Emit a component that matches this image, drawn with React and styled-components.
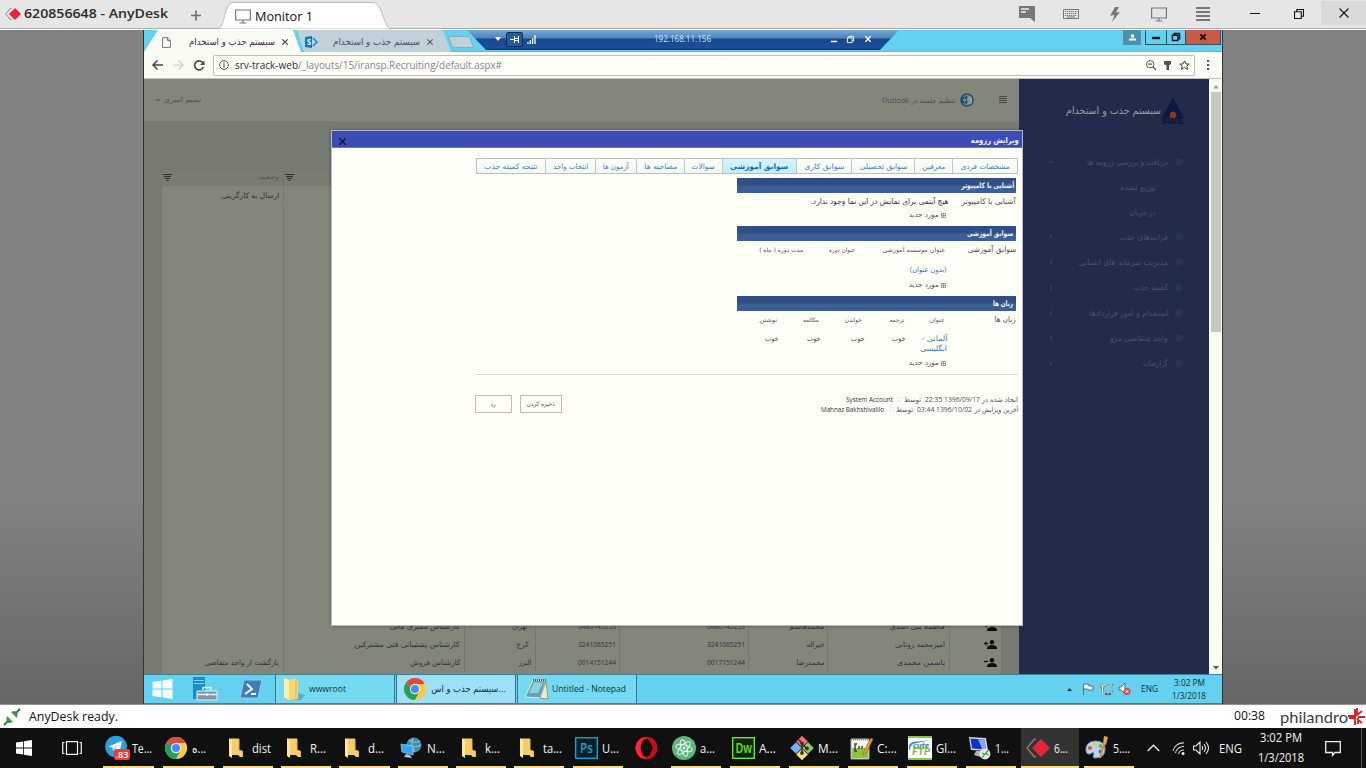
import React, { useLayoutEffect, useRef } from "react";
import styled, { createGlobalStyle, css } from "styled-components";

const Global = createGlobalStyle`
  * { box-sizing: border-box; }
  html, body { margin: 0; padding: 0; overflow: hidden; }
  body { width: 1366px; height: 768px; font-family: "Open Sans", "DejaVu Sans", sans-serif; background: #808080; }
`;

/* ---------- primitives ---------- */

const FitBox = styled.span`
  display: block;
  flex: none;
  width: ${(p) => p.$w}px;
  margin-inline-start: ${(p) => p.$gap || 0}px;
  font-family: ${(p) => (p.$rtl ? '"DejaVu Sans", sans-serif' : "inherit")};
  font-size: ${(p) => (p.$size ? `${p.$size}px` : "inherit")};
  font-weight: ${(p) => p.$weight || "inherit"};
  color: ${(p) => p.$color || "inherit"};
  line-height: 1.2;
`;
const FitLine = styled.span`
  display: flex;
  width: 100%;
  direction: ${(p) => (p.$rtl ? "rtl" : "ltr")};
`;
const FitInner = styled.span`
  flex: none;
  white-space: pre;
  transform-origin: ${(p) => (p.$rtl ? "right" : "left")} center;
`;

/* A single line of text condensed or widened to a given width. */
function Fit({ w, rtl, gap, size, weight, color, children }) {
  const ref = useRef(null);
  useLayoutEffect(() => {
    const el = ref.current;
    el.style.transform = "none";
    const natural = el.getBoundingClientRect().width;
    if (natural) el.style.transform = `scaleX(${w / natural})`;
  }, [w, children]);
  return (
    <FitBox $w={w} $rtl={rtl} $gap={gap} $size={size} $weight={weight} $color={color}>
      <FitLine $rtl={rtl}><FitInner ref={ref} $rtl={rtl}>{children}</FitInner></FitLine>
    </FitBox>
  );
}

const Svg = styled.svg`
  display: block;
  flex: none;
  margin-inline-start: ${(p) => p.$gap || 0}px;
  overflow: visible;
`;
function Icon({ w, h, gap, vb, children, ...rest }) {
  return (
    <Svg width={w} height={h} viewBox={vb || `0 0 ${w} ${h}`} fill="none" $gap={gap} {...rest}>
      {children}
    </Svg>
  );
}
const Spring = styled.div`flex: 1;`;

/* ---------- frame ---------- */

const Screen = styled.div`
  width: 1366px;
  height: 768px;
  display: flex;
  flex-direction: column;
  overflow: hidden;
`;
const TitleBar = styled.header`
  height: 30px;
  flex: none;
  display: flex;
  align-items: center;
  padding: 0 0 2px 5px;
  background: #e6e6e6;
  box-shadow: inset 0 -1px #fff, inset 0 -2px #aaa;
  color: #2b2b2b;
`;
const MonitorTab = styled.div`
  width: 171px;
  height: 28px;
  margin: 1px 0 0 18px;
  position: relative;
  flex: none;
  display: flex;
  align-items: center;
  padding: 3px 0 0 16px;
  color: #111;
`;
const TabShape = styled.svg`
  position: absolute;
  inset: 0;
  z-index: 0;
`;
const Over = styled.div`
  position: relative;
  display: flex;
  align-items: center;
`;
const CloseBox = styled.div`
  width: 45px;
  height: 24px;
  margin: 0 0 2px 17px;
  background: #dadada;
  display: grid;
  place-items: center;
`;
const Stage = styled.main`
  height: 675px;
  flex: none;
  display: flex;
  justify-content: flex-start;
  padding-left: 143px;
  background: linear-gradient(#818181 0%, #818181 70%, #666 100%);
  border-bottom: 1px solid #929292;
`;
const Remote = styled.div`
  position: relative;
  width: 1080px;
  height: 674px;
  display: flex;
  flex-direction: column;
  border-left: 1px solid #333;
  border-right: 1px solid #333;
`;

/* ---------- remote browser ---------- */

const TabStrip = styled.div`
  position: relative;
  height: 22px;
  flex: none;
  display: flex;
  align-items: flex-start;
  background: #63d1ef;
  border-bottom: 1px solid #7aafbc;
`;
const BrowserTab = styled.div`
  width: ${(p) => p.$w}px;
  height: 22px;
  margin-left: ${(p) => p.$ml || 0}px;
  padding: 2px 0 0 ${(p) => p.$pl}px;
  flex: none;
  display: flex;
  align-items: center;
  color: ${(p) => (p.$active ? "#42264b" : "#4c4b68")};
  background: ${(p) => (p.$active ? "#f8fcf2" : "#bfd1d9")};
  clip-path: polygon(${(p) => (p.$active ? "0 100%, 14px 0, 149px 0, 100% 100%" : "0 0, 146px 0, 100% 100%, 7px 100%")});
`;
const NewTab = styled.div`
  width: 22px;
  height: 12px;
  margin: 6px 0 0 -1px;
  background: #bfd1d9;
  border: 1px solid #86aebb;
  border-radius: 2px;
  transform: skewX(20deg);
`;
const WinButtons = styled.div`
  display: flex;
  height: 15px;
  margin-right: 1px;
`;
const WinButton = styled.div`
  width: ${(p) => p.$w}px;
  height: 15px;
  background: ${(p) => p.$bg || "#63d1ef"};
  border: ${(p) => (p.$plain ? "0" : "1px solid #2d5260")};
  border-top: 0;
  margin: 0 ${(p) => (p.$plain ? 5 : 0)}px 0 ${(p) => (p.$plain ? 0 : -1)}px;
  display: grid;
  place-items: center;
`;
const RdpBar = styled.div`
  position: absolute;
  left: 323px;
  top: 0;
  width: 432px;
  height: 20px;
  display: flex;
  align-items: center;
  padding: 0 0 2px 28px;
  background: linear-gradient(#76a9d6 0, #4d83bd 8px, #17488e 9px, #1c4f97 18px, #0f3a78 19px);
  clip-path: polygon(0 0, 100% 0, 413px 100%, 19px 100%);
  color: #d4e6f5;
`;
const PinBox = styled.div`
  width: 17px;
  height: 15px;
  margin: 0 4px 0 5px;
  border: 1px solid #0e2e57;
  border-radius: 2px;
  background: #245d99;
  display: grid;
  place-items: center;
`;
const Toolbar = styled.div`
  height: 27px;
  flex: none;
  display: flex;
  align-items: center;
  padding: 0 0 0 8px;
  background: #f8fcf2;
  border-bottom: 1px solid #cbbcbd;
`;
const Omnibox = styled.div`
  width: 982px;
  height: 21px;
  margin-left: 8px;
  padding: 0 4px 0 5px;
  display: flex;
  align-items: center;
  background: #fffff8;
  border: 1px solid #bcc1b8;
  border-radius: 2px;
`;

/* ---------- page behind the dialog ---------- */

const Page = styled.div`
  height: 595px;
  flex: none;
  display: flex;
`;
const Content = styled.section`
  width: 875px;
  display: flex;
  flex-direction: column;
  background: #787b71;
`;
const PageHeader = styled.div`
  height: 42px;
  flex: none;
  display: flex;
  align-items: center;
  padding: 0 12px;
  background: #83867b;
  color: #57485e;
`;
const Table = styled.div`
  width: 841px;
  height: 506px;
  margin: 47px 0 0 17px;
  display: flex;
  flex-direction: column;
  justify-content: space-between;
  background: #83867b;
  border: 1px solid #747769;
  border-bottom: 0;
  overflow: hidden;
`;
const rowGrid = css`
  display: grid;
  grid-template-columns: 122px 181px 71px 84px 129px 79px 122px 52px;
`;
const HeadRow = styled.div`
  ${rowGrid}
  height: 17px;
  background: #797c71;
`;
const Row = styled.div`
  ${rowGrid}
  height: ${(p) => p.$h || 18}px;
`;
const Cell = styled.div`
  display: flex;
  align-items: center;
  justify-content: ${(p) => (p.$split ? "space-between" : "flex-end")};
  padding: 0 ${(p) => p.$pr || 4}px 0 1px;
  border-right: 1px solid #74776c;
  color: #32323a;
`;
const Sidebar = styled.aside`
  width: 190px;
  background: #222c4a;
  direction: rtl;
  padding: 17px 24px 0 0;
`;
const Brand = styled.div`
  height: 30px;
  display: flex;
  align-items: center;
  color: #a09ca8;
`;
const BrandMark = styled.div`
  direction: ltr;
  flex: none;
`;
const Menu = styled.nav`
  margin-top: 23.5px;
`;
const MenuRow = styled.div`
  height: 25.1px;
  padding-right: ${(p) => (p.$sub ? 29 : 2)}px;
  padding-left: 30px;
  display: flex;
  align-items: center;
  justify-content: space-between;
  color: #48506d;
`;
const MenuMain = styled.div`
  display: flex;
  align-items: center;
`;
const ScrollTrack = styled.div`
  width: 13px;
  display: flex;
  flex-direction: column;
  align-items: center;
  padding: 6px 0 4px;
  background: #f8fcf4;
`;
const Thumb = styled.div`
  width: 10px;
  height: 240px;
  margin: 3px 0 auto;
  background: #c5c9c0;
`;

/* ---------- dialog ---------- */

const Dialog = styled.div`
  position: absolute;
  left: 187px;
  top: 100px;
  width: 692px;
  height: 496px;
  display: flex;
  flex-direction: column;
  background: #fffff8;
  border: 1px solid #b7bad0;
  box-shadow: 0 0 3px rgba(30, 35, 30, 0.5);
  direction: rtl;
`;
const DialogTitle = styled.div`
  height: 17px;
  flex: none;
  display: flex;
  align-items: center;
  justify-content: space-between;
  padding: 4px 3px 0 7px;
  background: #3b4cb5;
  border-bottom: 1px solid #6875c4;
  color: #f2f2ff;
`;
const DialogBody = styled.div`
  padding: 10px 4px 0 144px;
`;
const Tabs = styled.div`
  display: flex;
  width: 542px;
  height: 16px;
  border: 1px solid #b2c2c6;
`;
const FormTab = styled.div`
  width: ${(p) => p.$w}px;
  flex: none;
  display: grid;
  place-items: center;
  color: ${(p) => (p.$active ? "#1269b3" : "#4c7fbd")};
  background: ${(p) => (p.$active ? "linear-gradient(#d8f4ff, #c3ecfd)" : "linear-gradient(#fffff9, #f1f8f0)")};
  border-left: 1px solid #b9cbcc;
  &:last-child { border-left: 0; }
`;
const Bar = styled.div`
  width: 279px;
  height: 15px;
  margin: ${(p) => p.$mt}px 2px 0 0;
  padding-right: ${(p) => p.$pr || 2}px;
  display: flex;
  align-items: center;
  color: #f3f6fb;
  background: linear-gradient(#304e81 0, #304e81 7px, #3b5e99 8px, #3b5e99 100%);
`;
const Line = styled.div`
  height: ${(p) => p.$h}px;
  padding-right: ${(p) => p.$pr || 2}px;
  display: flex;
  align-items: center;
  color: #4e4e55;
`;
const Footer = styled.div`
  display: flex;
  justify-content: space-between;
  width: 543px;
  padding-top: 20px;
  border-top: 1px solid #dedfd8;
`;
const Meta = styled.div`
  display: flex;
  flex-direction: column;
`;
const Buttons = styled.div`
  display: flex;
  gap: 8px;
`;
const Button = styled.div`
  width: ${(p) => p.$w}px;
  height: 18px;
  display: grid;
  place-items: center;
  border: 1px solid #bebfb9;
  color: #4a4a50;
`;

/* ---------- bars below ---------- */

const RemoteTaskbar = styled.div`
  height: 30px;
  flex: none;
  display: flex;
  align-items: center;
  padding-left: 8px;
  background: #63d1ef;
  border-top: 1px solid #3d8299;
  border-bottom: 1px solid #3d8299;
  color: #12303b;
`;
const RemoteTask = styled.div`
  width: 120px;
  height: 28px;
  margin-left: ${(p) => p.$ml || 1}px;
  padding-left: 7px;
  flex: none;
  display: flex;
  align-items: center;
  background: ${(p) => (p.$active ? "#9de1f8" : "#75daf1")};
  border-left: 1px solid #34768c;
  border-right: 1px solid #34768c;
`;
const Clock = styled.div`
  display: flex;
  flex-direction: column;
  align-items: center;
  justify-content: space-between;
  height: ${(p) => p.$h}px;
  width: ${(p) => p.$w}px;
  margin-left: ${(p) => p.$ml}px;
`;
const StatusBar = styled.div`
  height: 23px;
  flex: none;
  display: flex;
  align-items: center;
  padding: 0 1px 0 4px;
  background: #fff;
  color: #111;
`;
const Maker = styled.div`
  display: flex;
  align-items: center;
  margin-left: 15px;
  font-family: Lato, sans-serif;
`;
const Taskbar = styled.footer`
  height: 40px;
  flex: none;
  display: flex;
  align-items: center;
  padding-left: 16px;
  background: #101010;
  color: #f4f4f4;
`;
const Task = styled.div`
  width: ${(p) => p.$w || 50}px;
  height: 40px;
  margin-left: ${(p) => p.$ml}px;
  padding-left: ${(p) => (p.$active ? 5 : 1)}px;
  flex: none;
  display: flex;
  align-items: center;
  background: ${(p) => (p.$active ? "#333" : "transparent")};
  box-shadow: ${(p) => (p.$bare ? "none" : "inset 0 -2px #fcdc80")};
`;
const Slot = styled.div`
  width: 24px;
  height: 24px;
  margin-right: 4px;
  flex: none;
  display: grid;
  place-items: center;
`;

/* ---------- drawings ---------- */

const ChromeLogo = () => (
  <Icon w={22} h={22} vb="0 0 24 24">
    <circle cx="12" cy="12" r="12" fill="#fcca3f" />
    <path d="M12 12L1.6 6A12 12 0 0 1 22.4 6Z" fill="#dc4b3e" />
    <path d="M1.6 6A12 12 0 0 0 12 24L17.2 15 12 12Z" fill="#22a15d" />
    <path d="M12 6.5H22.6A12 12 0 0 1 12 24L17 15Z" fill="#fcca3f" />
    <circle cx="12" cy="12" r="5.6" fill="#f4f4f4" />
    <circle cx="12" cy="12" r="4.4" fill="#4a8af4" />
  </Icon>
);
const FolderIcon = () => (
  <Icon w={14} h={20}>
    <path d="M0 0.5H10V12L14 13V19H11L9 17H0Z" fill="#f6cd6b" />
    <path d="M0 0.5L3 2V20L0 18Z" fill="#ffe79c" />
    <path d="M10 1V12L13.5 13.5V19" stroke="#e6b650" />
  </Icon>
);
const AnyDeskLogo = ({ w = 24, h = 20 }) => (
  <Icon w={w} h={h} vb="0 0 24 20">
    <path d="M10 2L8.5 1 1 10 8.5 19 10 18" stroke="#8e7777" strokeWidth="1.4" />
    <path d="M15 1L24 10 15 19 6 10Z" fill="#e32636" />
  </Icon>
);
const WindowsLogo = ({ w, h, color }) => (
  <Icon w={w} h={h} vb="0 0 20 20">
    <path d="M0 3L9 1.8V9.5H0ZM10 1.6L20 0V9.5H10ZM0 10.5H9V18.2L0 17ZM10 10.5H20V20L10 18.4Z" fill={color} />
  </Icon>
);
const Cross = ({ s, color, sw = 1.2, gap }) => (
  <Icon w={s} h={s} vb="0 0 10 10" gap={gap}><path d="M.5.5L9.5 9.5M9.5.5L.5 9.5" stroke={color} strokeWidth={sw} /></Icon>
);
const Restore = ({ s, color, sw = 1.2, gap }) => (
  <Icon w={s} h={s} vb="0 0 11 11" gap={gap}><path d="M.6 3H8V10.4H.6ZM3 3V.6H10.4V8H8" stroke={color} strokeWidth={sw} /></Icon>
);
const Filter = () => (
  <Icon w={9} h={7}><path d="M0 .5H9M1 2.5H8M2 4.5H7M3.5 6.5H5.5" stroke="#2c2e28" /></Icon>
);
const Gear = () => (
  <Icon w={8} h={8}>
    <circle cx="4" cy="4" r="3" stroke="#2c4267" strokeWidth="1.2" strokeDasharray="1.6 .7" />
    <circle cx="4" cy="4" r="1.3" stroke="#2c4267" strokeWidth=".8" />
  </Icon>
);
const Person = ({ plus }) => (
  <Icon w={13} h={9}>
    <circle cx="8" cy="2.2" r="2.2" fill="#0c0d0a" />
    <path d="M3 9V7.5Q4 5 8 5T13 7.5V9Z" fill="#0c0d0a" />
    <path d={plus ? "M0 3.5H4M2 1.5V5.5" : "M0 3.5H4"} stroke="#0c0d0a" strokeWidth="1.2" />
  </Icon>
);
const PlusBox = () => (
  <Icon w={5} h={5}><path d="M.5.5H4.5V4.5H.5ZM2.5 0V5M0 2.5H5" stroke="#898983" strokeWidth=".8" /></Icon>
);
const MonitorIcon = ({ gap }) => (
  <Icon w={16} h={15} gap={gap}><path d="M.6 1H15.4V11H.6ZM8 11V13.5M4.5 14H11.5" stroke="#777" strokeWidth="1.2" /></Icon>
);

const TelegramLogo = () => (
  <Icon w={24} h={24}>
    <circle cx="12" cy="10.5" r="10.8" fill="#2ba0da" />
    <path d="M4.5 10.5L18 5 15.5 16 11 13 9 15 8.5 11.8Z" fill="#fff" />
    <path d="M9 12L15 8 11 13 9 15Z" fill="#b5d7e8" />
    <rect x="10" y="13" width="16" height="11" rx="2.5" fill="#ed3b36" />
    <text x="11.5" y="21.8" fontFamily="Open Sans" fontSize="9" fontWeight="600" fill="#fff" textLength="13">.83</text>
  </Icon>
);
const NetworkLogo = () => (
  <Icon w={22} h={22}>
    <circle cx="14" cy="8" r="7.5" fill="#3f8cab" />
    <path d="M9 3Q13 7 20 4M7 8Q14 12 21 8M13 1Q10 8 15 15" stroke="#8fc4da" strokeWidth="1.1" />
    <path d="M1 7L13 9V18L2 15Z" fill="#32a8f4" stroke="#9bd6f8" strokeWidth=".7" />
    <path d="M6 17L4 20 12 21 10 18" fill="#b6c6d0" />
  </Icon>
);
const AppBadge = ({ label, bg, fg, lx, tl }) => (
  <Icon w={23} h={22}>
    <rect x=".7" y=".7" width="21.6" height="20.6" fill={bg} stroke={fg} strokeWidth="1.4" />
    <text x={lx} y="16" fontFamily="Open Sans" fontSize="14.5" fontWeight="600" fill={fg} textLength={tl} lengthAdjust="spacingAndGlyphs">{label}</text>
  </Icon>
);
const OperaLogo = () => (
  <Icon w={23} h={22}>
    <ellipse cx="11.5" cy="11" rx="8.5" ry="8.7" stroke="#c4101c" strokeWidth="5" />
    <path d="M11.5 0A11 11 0 1 0 11.5 22Q5.5 20 5.5 11T11.5 0" fill="#ff2636" />
    <ellipse cx="11.5" cy="11" rx="5" ry="8.7" fill="#101010" />
  </Icon>
);
const AtomLogo = () => (
  <Icon w={24} h={24}>
    <circle cx="12" cy="12" r="12" fill="#5fb57d" />
    <g stroke="#e6f6eb" strokeWidth="1">
      <ellipse cx="12" cy="12" rx="8.5" ry="3.2" transform="rotate(15 12 12)" />
      <ellipse cx="12" cy="12" rx="8.5" ry="3.2" transform="rotate(75 12 12)" />
      <ellipse cx="12" cy="12" rx="8.5" ry="3.2" transform="rotate(135 12 12)" />
    </g>
    <circle cx="12" cy="12" r="1.2" fill="#fff" />
  </Icon>
);
const GitLogo = () => (
  <Icon w={24} h={24}>
    <path d="M12 -.3L17.8 5.5 12 11.3 6.2 5.5Z" fill="#f47070" />
    <path d="M6 6.2L11.8 12 6 17.8 .2 12Z" fill="#7bb0f4" />
    <path d="M18 6.2L23.8 12 18 17.8 12.2 12Z" fill="#8bcf69" />
    <path d="M12 12.7L17.8 18.5 12 24.3 6.2 18.5Z" fill="#ffe17a" />
    <path d="M8.5 3.5L12 7V17M12 8L17 12.5" stroke="#33302e" strokeWidth="1.5" />
    <circle cx="12" cy="7.5" r="1.7" fill="#33302e" /><circle cx="12" cy="17" r="1.9" fill="#33302e" /><circle cx="17" cy="12.5" r="1.9" fill="#33302e" />
  </Icon>
);
const EditorLogo = () => (
  <Icon w={23} h={23}>
    <path d="M1 2H19V22H1Z" fill="#f4f6ec" stroke="#9fa398" />
    <path d="M2 11H18V21H2Z" fill="#8cc637" />
    <path d="M1 2.5H19" stroke="#888" strokeWidth="2" strokeDasharray="1 1" />
    <path d="M7 7H5V14H7M9 9V12M12 9V12" stroke="#3a3a32" strokeWidth="1.4" />
    <path d="M21 1L14 14 13 18 17 15 23 2Z" fill="#e5a126" stroke="#8c5b17" strokeWidth=".6" />
  </Icon>
);
const FtpLogo = () => (
  <Icon w={24} h={24}>
    <path d="M0 0H24V24H0Z" fill="#fff" />
    <path d="M0 0H24V2H0ZM0 22H24V24H0Z" fill="#8bc34c" />
    <path d="M1 14Q-1 6 8 5.5L22 4.5Q13 5.5 5 8Q2 10 2 14Z" fill="#3095cb" />
    <text x="5" y="12" fontFamily="Lato" fontStyle="italic" fontWeight="900" fontSize="7.5" fill="#2e82ac" textLength="16" lengthAdjust="spacingAndGlyphs">cute</text>
    <text x="4" y="18.7" fontFamily="Lato" fontStyle="italic" fontWeight="900" fontSize="8.5" fill="#7dbb3e" textLength="18" lengthAdjust="spacingAndGlyphs">FTP</text>
  </Icon>
);
const RdpLogo = () => (
  <Icon w={23} h={24}>
    <path d="M1 1L18 2 20 15 3 14Z" fill="#d5d9dc" />
    <path d="M2.5 2.5L16.5 3.4 18 13.5 4 12.5Z" fill="#1530c4" />
    <path d="M10 3L16.5 3.4 18 13.5 14 13Z" fill="#8ca5ee" />
    <path d="M8 15L6 19 13 21 13 15Z" fill="#b2b7b9" />
    <circle cx="17" cy="18" r="5.4" fill="#e5e9e4" />
    <path d="M14 17L16.5 18.5 14.5 21.5M20 14.5L17.5 17.5 20.5 19" stroke="#3a9c3a" strokeWidth="1.2" />
  </Icon>
);
const PaintLogo = () => (
  <Icon w={24} h={24}>
    <path d="M1 15Q0 6 10 5Q20 5 20 13Q20 22 10 22Q7 22 9 18Q9 15 5 18Q2 19 1 15Z" fill="#b4d9ee" stroke="#6d9dbd" />
    <circle cx="5" cy="12" r="2" fill="#e94d34" /><circle cx="10" cy="8.5" r="2" fill="#f6c33a" />
    <circle cx="15.5" cy="10" r="2" fill="#6eb644" /><circle cx="15.5" cy="15.5" r="2" fill="#3f6bd0" />
    <path d="M19 8L15 22" stroke="#d28b3b" strokeWidth="2" /><path d="M18 8L19 0 23 1 21 9Z" fill="#d9a35a" />
  </Icon>
);
const ServerIcon = ({ gap }) => (
  <Icon w={24} h={24} gap={gap}>
    <path d="M0 0H12V22H0Z" fill="#188ccc" /><path d="M1 3.5H11M1 6.5H11" stroke="#7cd6f4" />
    <path d="M4 14H24V23H4Z" fill="#7c98a7" stroke="#e3f2f5" /><path d="M10 13V10.5H18V13M4 17.5H24M14 16V19" stroke="#e3f2f5" strokeWidth="1.4" />
  </Icon>
);
const PowerShellIcon = ({ gap }) => (
  <Icon w={22} h={18} gap={gap}>
    <path d="M4 0H22L18 18H0Z" fill="#3d7eb8" stroke="#a5c9de" />
    <path d="M7 4L12 9 5 14M11 14H16" stroke="#f0f8ff" strokeWidth="2" />
  </Icon>
);
const BigFolder = () => (
  <Icon w={22} h={22}>
    <path d="M16 15L22 17 18 22H8Z" fill="#4fb1d3" />
    <path d="M1 0L6 1V22L1 19ZM6 2L12 0 15 3V21L6 22Z" fill="#f4d778" />
    <path d="M1 0L6 2V22L1 19Z" fill="#fff0ac" /><path d="M13 3V20" stroke="#d7af4b" />
  </Icon>
);
const NotepadIcon = () => (
  <Icon w={23} h={21}>
    <path d="M8 1L21 2 15 19 0 18Z" fill="#5fa5b5" stroke="#d4eef2" /><path d="M9 3L18 4 13 14 4 14Z" fill="#8fd0dc" />
    <path d="M21 2L23 20 15 19Z" fill="#eee8d5" stroke="#8b7854" strokeWidth=".7" /><path d="M8 1H21" stroke="#555" strokeDasharray="1 1" strokeWidth="2" />
  </Icon>
);

/* ---------- data ---------- */

const formTabs = [
  ["مشخصات فردی", 65, 49], ["معرفین", 38, 23], ["سوابق تحصیلی", 63, 48], ["سوابق کاری", 55, 40],
  ["سوابق آموزشی", 74, 58, true], ["سوالات", 38, 23], ["مصاحبه ها", 48, 33], ["آزمون ها", 41, 26],
  ["انتخاب واحد", 50, 35], ["نتیجه کمیته جذب", 68, 53],
];
const menu = [
  ["دریافت و بررسی رزومه ها", 81, "open"], ["توزیع نشده", 36, "sub"], ["در جریان", 26, "sub"],
  ["فرایندهای جذب", 48], ["مدیریت سرمایه های انسانی", 89], ["کمیته جذب", 35],
  ["استخدام و امور قراردادها", 79], ["واحد متقاضی نیرو", 58], ["گزارشات", 25],
];
const rows = [
  [null, ["کارشناس ممیزی مالی", 70], ["تهران", 15, 8], "0480145253", "0480145253", ["محمدقاسم", 35], ["فاطمه بنی اسدی", 55], true],
  [null, ["کارشناس پشتیبانی فنی مشترکین", 105], ["کرج", 12, 6], "3241065251", "3241065251", ["خیراله", 18], ["امیرمحمد روتابی", 50], true],
  [["بازگشت از واحد متقاضی", 74], ["کارشناس فروش", 50], ["البرز", 13, 4], "0014151244", "0017151244", ["محمدرضا", 28], ["یاسمن محمدی", 48], false],
];
const tasks = [
  [<TelegramLogo />, "Te...", 20, 9, 51], [<ChromeLogo />, "ه...", 14, 9, 51], [<FolderIcon />, "dist", 19, 9], [<FolderIcon />, "R...", 16, 8],
  [<FolderIcon />, "d...", 16, 8, 51], [<NetworkLogo />, "N...", 18, 8], [<FolderIcon />, "k...", 15, 8], [<FolderIcon />, "ta...", 19, 8],
  [<AppBadge label="Ps" bg="#071c26" fg="#0ba6d1" lx="5" tl="13" />, "U...", 17, 9], [<OperaLogo />, null, 0, 10, 26],
  [<AtomLogo />, "a...", 15, 12], [<AppBadge label="Dw" bg="#10230b" fg="#6bea13" lx="3.5" tl="16.5" />, "A...", 17, 9], [<GitLogo />, "M...", 20, 9],
  [<EditorLogo />, "C:...", 20, 9], [<FtpLogo />, "Gl...", 20, 9], [<RdpLogo />, "1...", 14, 9],
  [<AnyDeskLogo />, "6...", 14, 5, 58, true], [<PaintLogo />, "5....", 17, 5],
];

const NewItem = ({ h }) => (
  <Line $h={h} $pr={72}><PlusBox /><Fit rtl w={30} gap={2} size={7}>مورد جدید</Fit></Line>
);

function EditDialog() {
  return (
    <Dialog>
      <DialogTitle>
        <Fit rtl w={48} size={8} weight={700}>ویرایش رزومه</Fit>
        <Cross s={7} color="#10183e" sw={2} />
      </DialogTitle>
      <DialogBody>
        <Tabs>
          {formTabs.map(([t, w, tw, on]) => (
            <FormTab key={t} $w={w} $active={on}><Fit rtl w={tw} size={7.5} weight={on ? 700 : 400}>{t}</Fit></FormTab>
          ))}
        </Tabs>
        <Bar $mt={4}><Fit rtl w={53} size={7.5} weight={700}>آشنایی با کامپیوتر</Fit></Bar>
        <Line $h={17}>
          <Fit rtl w={54} size={8}>آشنایی با کامپیوتر</Fit>
          <Fit rtl w={138} gap={13} size={8} color="#33333a">هیچ آیتمی برای نمایش در این نما وجود ندارد.</Fit>
        </Line>
        <NewItem h={10} />
        <Bar $mt={6} $pr={3}><Fit rtl w={46} size={7.5} weight={700}>سوابق آموزشی</Fit></Bar>
        <Line $h={18}>
          <Fit rtl w={49} size={8}>سوابق آموزشی</Fit>
          <Fit rtl w={63} gap={22} size={6}>عنوان موسسه آموزشی</Fit>
          <Fit rtl w={26} gap={27} size={6}>عنوان دوره</Fit>
          <Fit rtl w={44} gap={26} size={6}>مدت دوره ( ماه )</Fit>
        </Line>
        <Line $h={20} $pr={71}><Fit rtl w={37} size={7.5} color="#3a73bd">(بدون عنوان)</Fit></Line>
        <NewItem h={12} />
        <Bar $mt={5} $pr={3}><Fit rtl w={20} size={7.5} weight={700}>زبان ها</Fit></Bar>
        <Line $h={18}>
          <Fit rtl w={21} size={8}>زبان ها</Fit>
          <Fit rtl w={15} gap={50} size={6}>عنوان</Fit>
          <Fit rtl w={15} gap={26} size={6}>ترجمه</Fit>
          <Fit rtl w={17} gap={27} size={6}>خواندن</Fit>
          <Fit rtl w={16} gap={26} size={6}>مکالمه</Fit>
          <Fit rtl w={18} gap={26} size={6}>نوشتن</Fit>
        </Line>
        <Line $h={4} />
        <Line $h={10} $pr={71}>
          <Fit rtl w={26} size={7.5} color="#3a73bd">آلمانی -</Fit>
          {[15, 28, 30, 29].map((g, i) => <Fit rtl key={i} w={13.5} gap={g} size={7.5}>خوب</Fit>)}
        </Line>
        <Line $h={10} $pr={71}><Fit rtl w={27} size={7.5} color="#3a73bd">انگلیسی</Fit></Line>
        <Line $h={3} />
        <NewItem h={14} />
        <Line $h={4} />
        <Footer>
          <Meta>
            <Line $h={10} $pr={0.01}>
              <Fit rtl w={36} size={7}>ایجاد شده در</Fit><Fit w={55} gap={2} size={7}>22:35 1396/09/17</Fit>
              <Fit rtl w={17} gap={4} size={7}>توسط</Fit><Fit w={5} gap={2} size={6} color="#ccc">□</Fit><Fit w={47} gap={4} size={7} color="#333">System Account</Fit>
            </Line>
            <Line $h={10} $pr={0.01}>
              <Fit rtl w={44} size={7}>آخرین ویرایش در</Fit><Fit w={55} gap={2} size={7}>03:44 1396/10/02</Fit>
              <Fit rtl w={17} gap={4} size={7}>توسط</Fit><Fit w={5} gap={2} size={6} color="#ccc">□</Fit><Fit w={63} gap={5} size={7} color="#333">Mahnaz Bakhshivalilo</Fit>
            </Line>
          </Meta>
          <Buttons>
            <Button $w={42}><Fit rtl w={28} size={6}>ذخیره کردن</Fit></Button>
            <Button $w={37}><Fit rtl w={5} size={6}>رد</Fit></Button>
          </Buttons>
        </Footer>
      </DialogBody>
    </Dialog>
  );
}

function Browser() {
  return (
    <>
      <TabStrip>
        <BrowserTab $active $w={157} $pl={18}>
          <Icon w={9} h={11}><path d="M.6.6H5.5L8.4 3.5V10.4H.6ZM5.5.6V3.5H8.4" stroke="#777" /></Icon>
          <Fit rtl w={86} gap={18} size={9.5}>سیستم جذب و استخدام</Fit>
          <Cross s={6} color="#444" sw={2} gap={7} />
        </BrowserTab>
        <BrowserTab $w={154} $ml={-4} $pl={8}>
          <Icon w={13} h={12}><path d="M0 1L7 0V12L0 11Z" fill="#0878cf" /><path d="M8 2L12 6 8 10" stroke="#1688d4" strokeWidth="1.5" /><text x="1.8" y="8.7" fontSize="8" fontWeight="700" fill="#fff" fontFamily="Open Sans">S</text></Icon>
          <Fit rtl w={87} gap={15} size={9.5}>سیستم جذب و استخدام</Fit>
          <Cross s={6} color="#555" sw={1.7} gap={7} />
        </BrowserTab>
        <NewTab />
        <Spring />
        <WinButtons>
          <WinButton $plain $w={18} $bg="#4b91aa"><Icon w={7} h={7}><circle cx="3.5" cy="2" r="1.7" fill="#fff" /><path d="M0 4.5H7V6.5H0Z" fill="#fff" /></Icon></WinButton>
          <WinButton $w={22}><Icon w={8} h={4}><path d="M0 3H8" stroke="#071a20" strokeWidth="2.4" /></Icon></WinButton>
          <WinButton $w={20}><Restore s={8} color="#071a20" sw={2} /></WinButton>
          <WinButton $w={36} $bg="#c75b48"><Cross s={6} color="#160907" sw={3} /></WinButton>
        </WinButtons>
        <RdpBar>
          <Icon w={6} h={4}><path d="M0 0H6L3 4Z" fill="#fff" /></Icon>
          <PinBox><Icon w={9} h={7}><path d="M0 3.5H4M4.5 0V7M5 2.5H8M5 4.5H8M8.5 0V7" stroke="#fff" /></Icon></PinBox>
          <Icon w={9} h={9}><path d="M1 9V7M3.3 9V5M5.6 9V3M8 9V0" stroke="#fff" strokeWidth="1.3" /></Icon>
          <Fit w={57} gap={118} size={9}>192.168.11.156</Fit>
          <Icon w={6} h={8} gap={120}><path d="M0 6.5H6" stroke="#fff" strokeWidth="1.6" /></Icon>
          <Restore s={7} color="#fff" sw={1.4} gap={10} />
          <Cross s={6} color="#fff" sw={2.4} gap={11} />
        </RdpBar>
      </TabStrip>
      <Toolbar>
        <Icon w={11} h={10}><path d="M11 5H1M5.5.5L1 5 5.5 9.5" stroke="#474747" strokeWidth="1.5" /></Icon>
        <Icon w={11} h={10} gap={10}><path d="M0 5H10M5.5.5L10 5 5.5 9.5" stroke="#ccd0c9" strokeWidth="1.2" /></Icon>
        <Icon w={12} h={11} gap={9}><path d="M10 3.2A4.5 4.5 0 1 0 10.3 7" stroke="#474747" strokeWidth="1.7" /><path d="M11.5.5V5H7Z" fill="#474747" /></Icon>
        <Omnibox>
          <Icon w={10} h={10}><circle cx="5" cy="5" r="4.4" stroke="#555" /><path d="M5 4.3V8M5 2.2V3.4" stroke="#555" strokeWidth="1.2" /></Icon>
          <Fit w={63} gap={6} size={10.5} color="#2c2c35">srv-track-web</Fit>
          <Fit w={204} size={10.5} color="#85858d">/_layouts/15/iransp.Recruiting/default.aspx#</Fit>
          <Spring />
          <Icon w={10} h={10}><circle cx="4.2" cy="4.2" r="3.7" stroke="#555" /><path d="M7 7L10 10M2.3 4.2H6" stroke="#555" strokeWidth="1.2" /></Icon>
          <Icon w={7} h={9} gap={8}><path d="M0 0H7V3L5 4.5V9H2.5V4.5L0 3Z" fill="#555" /></Icon>
          <Icon w={11} h={10} gap={8}><path d="M5.5.8L7 4H10.3L7.7 6.1 8.6 9.5 5.5 7.5 2.4 9.5 3.3 6.1.7 4H4Z" stroke="#444" /></Icon>
        </Omnibox>
        <Icon w={3} h={10} gap={12}><path d="M0 0H2.2V2H0ZM0 4H2.2V6H0ZM0 8H2.2V10H0Z" fill="#555" /></Icon>
      </Toolbar>
      <Page>
        <Content>
          <PageHeader>
            <Icon w={4} h={4}><path d="M0 1L2 3 4 1" stroke="#55485d" /></Icon>
            <Fit rtl w={37} gap={4} size={7}>نسیم امیری</Fit>
            <Spring />
            <Fit rtl w={73} size={7.5}>تنظیم جلسه در Outlook</Fit>
            <Icon w={14} h={14} gap={5}><circle cx="7" cy="7" r="6" stroke="#244d69" strokeWidth="1.7" /><path d="M2 4.5L7.5 3V11L2 9.5Z" fill="#164b72" /><path d="M7 5H11.5V10H7M7 6L9 8 11.5 5" stroke="#a2abad" /><circle cx="4.8" cy="7" r="1.2" stroke="#9ba8ac" /></Icon>
            <Icon w={8} h={8} gap={25}><path d="M0 .5H8M0 2.5H8M0 4.5H8M0 6.5H8" stroke="#474c46" /></Icon>
          </PageHeader>
          <Table>
            <div>
              <HeadRow>
                <Cell $split><Filter /><Fit rtl w={21} size={7} color="#55505b">وضعیت</Fit></Cell>
                <Cell $split><Filter /></Cell>
              </HeadRow>
              <Row><Cell><Fit rtl w={58} size={7.5}>ارسال به کارگزینی</Fit></Cell><Cell /></Row>
            </div>
            <Row $h={410}>{rows[0].map((_, i) => <Cell key={i} />)}</Row>
            <div>
              {rows.map(([state, job, city, a, b, first, name, plus], i) => (
                <Row key={i}>
                  <Cell>{state && <Fit rtl w={state[1]} size={7.5}>{state[0]}</Fit>}</Cell>
                  <Cell><Fit rtl w={job[1]} size={7.5}>{job[0]}</Fit></Cell>
                  <Cell $pr={city[2]}><Fit rtl w={city[1]} size={7.5}>{city[0]}</Fit></Cell>
                  <Cell $pr={3}><Fit w={38} size={7.5}>{a}</Fit></Cell>
                  <Cell $pr={3}><Fit w={38} size={7.5}>{b}</Fit></Cell>
                  <Cell $pr={3}><Fit rtl w={first[1]} size={7.5}>{first[0]}</Fit></Cell>
                  <Cell><Fit rtl w={name[1]} size={7.5}>{name[0]}</Fit></Cell>
                  <Cell><Person plus={plus} /></Cell>
                </Row>
              ))}
              <Row $h={3} />
            </div>
          </Table>
        </Content>
        <Sidebar>
          <Brand>
            <BrandMark>
              <Icon w={24} h={27}>
                <path d="M12 0L23 20H16L12 11 8 20H1Z" fill="#071a45" /><circle cx="12" cy="17" r="3.2" fill="#8e3821" />
                <text x="1" y="26" fontFamily="Lato" fontSize="6.5" fontWeight="900" fill="#07102e" textLength="22" lengthAdjust="spacingAndGlyphs">SHATEL</text>
              </Icon>
            </BrandMark>
            <Fit rtl w={95} size={10}>سیستم جذب و استخدام</Fit>
          </Brand>
          <Menu>
            {menu.map(([t, w, kind]) => (
              <MenuRow key={t} $sub={kind === "sub"}>
                <MenuMain>{kind !== "sub" && <Gear />}<Fit rtl w={w} gap={kind === "sub" ? 0 : 7} size={8.5}>{t}</Fit></MenuMain>
                {kind !== "sub" && <Icon w={4} h={4}><path d={kind === "open" ? "M0 3L2 1 4 3" : "M3 0L1 2 3 4"} stroke="#414b6a" /></Icon>}
              </MenuRow>
            ))}
          </Menu>
        </Sidebar>
        <ScrollTrack>
          <Icon w={6} h={4}><path d="M0 3.5H6L3 0Z" fill="#a3a69e" /></Icon>
          <Thumb />
          <Icon w={6} h={4}><path d="M0 0H6L3 3.5Z" fill="#55564f" /></Icon>
        </ScrollTrack>
      </Page>
    </>
  );
}

export default function App() {
  return (
    <Screen>
      <Global />
      <TitleBar>
        <AnyDeskLogo w={16} h={14} />
        <Fit w={144} gap={3} size={13} weight={600}>620856648 - AnyDesk</Fit>
        <Icon w={10} h={10} gap={23}><path d="M0 6.5H10M5 1.5V11.5" stroke="#6c6c6c" strokeWidth="1.6" /></Icon>
        <MonitorTab>
          <TabShape width="171" height="28" viewBox="0 0 171 28"><path d="M0 28C6 24 5 4 13 1.5H155C163 3 165 25 171 28Z" fill="#fff" stroke="#bbb" /></TabShape>
          <Over><MonitorIcon /><Fit w={58} gap={4} size={13.5}>Monitor 1</Fit></Over>
        </MonitorTab>
        <Spring />
        <Icon w={16} h={16}><path d="M0 0H16V16L11 12H0Z" fill="#777" /><path d="M2 3H10M2 6H7" stroke="#eee" strokeWidth="1.3" /></Icon>
        <Icon w={16} h={10} gap={28}><path d="M.5.5H15.5V9.5H.5Z" stroke="#777" /><path d="M2 2.5H14M2 4.5H14M2 6.5H14" stroke="#777" strokeDasharray="1.3 .7" /><path d="M4 8H12" stroke="#777" /></Icon>
        <Icon w={10} h={15} gap={31}><path d="M5 0H9L6 5.5 10 5 2 15 4.5 8 0 8.7Z" fill="#777" /></Icon>
        <MonitorIcon gap={31} />
        <Icon w={14} h={14} gap={29}><path d="M0 1H14M0 5H14M0 9H14M0 13H14" stroke="#777" strokeWidth="2" /></Icon>
        <Icon w={10} h={10} gap={40}><path d="M0 4.5H10" stroke="#111" /></Icon>
        <Restore s={10} color="#111" gap={34} />
        <CloseBox><Cross s={10} color="#111" sw={1.1} /></CloseBox>
      </TitleBar>
      <Stage>
        <Remote>
          <Browser />
          <RemoteTaskbar>
            <WindowsLogo w={21} h={20} color="#f8fff9" />
            <ServerIcon gap={20} />
            <PowerShellIcon gap={23} />
            <RemoteTask $ml={13}><BigFolder /><Fit w={37} gap={4} size={9.5}>wwwroot</Fit></RemoteTask>
            <RemoteTask $active><ChromeLogo /><Fit rtl w={75} gap={5} size={9.5}>...سیستم جذب و اس</Fit></RemoteTask>
            <RemoteTask><NotepadIcon /><Fit w={74} gap={4} size={9.5}>Untitled - Notepad</Fit></RemoteTask>
            <Spring />
            <Icon w={5} h={3}><path d="M0 3H5L2.5 0Z" fill="#12303b" /></Icon>
            <Icon w={12} h={12} gap={10}><path d="M1.5 12V1M2 1H6L7 3H11V7H6L5 6H2" fill="#e8f6f5" stroke="#52727c" /></Icon>
            <Icon w={13} h={12} gap={6}><path d="M4 2H12V8H5M8 8V11M5 11H11M1 0V3H4V0M2.5 3V10" stroke="#466773" strokeWidth="2" /><path d="M4 2H12V8H5M8 8V11M1 0V3H4V0M2.5 3V10" stroke="#edf8f5" /></Icon>
            <Icon w={13} h={12} gap={5}><path d="M1 4H3L7 0V11L3 7H1Z" fill="#e8f6f5" stroke="#52727c" /><circle cx="9" cy="8.5" r="3.5" fill="#d94941" /><path d="M7.5 7L10.5 10M10.5 7L7.5 10" stroke="#fff" /></Icon>
            <Fit w={17} gap={10} size={9.5}>ENG</Fit>
            <Clock $h={25} $w={36} $ml={13}><Fit w={31} size={9.5}>3:02 PM</Fit><Fit w={34} size={9.5}>1/3/2018</Fit></Clock>
            <Icon w={15} h={1} />
          </RemoteTaskbar>
          <EditDialog />
        </Remote>
      </Stage>
      <StatusBar>
        <Icon w={16} h={16}><path d="M0 16L4 12M12 4L16 0" stroke="#28763c" strokeWidth="1.8" /><path d="M3 7L9 13 6 14Q1 15 3 7ZM7 3L13 9Q15 2 10 2Z" fill="#3c924c" /></Icon>
        <Fit w={89} gap={9} size={13}>AnyDesk ready.</Fit>
        <Spring />
        <Fit w={31} size={12}>00:38</Fit>
        <Maker>
          <Fit w={68} size={16} color="#414141">philandro</Fit>
          <Icon w={17} h={18}><path d="M0 8H7V1M9 0V7L14 3M10 9H17M9 11L14 15M7 17V10H1M10 10V16" stroke="#dc2028" strokeWidth="1.9" /></Icon>
        </Maker>
      </StatusBar>
      <Taskbar>
        <WindowsLogo w={16} h={16} color="#fff" />
        <Icon w={20} h={14} gap={30}><path d="M4.5.7H15.5V13.3H4.5ZM2.5 1.5H.7V12.5H2.5M17.5 1.5H19.3V12.5H17.5" stroke="#eee" strokeWidth="1.2" /></Icon>
        <Icon w={12} h={1} />
        {tasks.map(([icon, label, w, ml, tw, on], i) => (
          <Task key={i} $ml={ml} $w={tw} $active={on} $bare={!label}>
            <Slot>{icon}</Slot>
            {label && <Fit w={w} size={12.5}>{label}</Fit>}
          </Task>
        ))}
        <Spring />
        <Icon w={13} h={8}><path d="M.7 7L6.5 1.2 12.3 7" stroke="#eee" strokeWidth="1.3" /></Icon>
        <Icon w={13} h={13} gap={12}><path d="M1 9A10 10 0 0 1 12 1M3.5 11A8 8 0 0 1 12 4.5M6.5 12A5 5 0 0 1 12 8" stroke="#ddd" strokeWidth="1.1" /><circle cx="11" cy="11.5" r="1.5" fill="#fff" /></Icon>
        <Icon w={16} h={14} gap={8}><path d="M.6 5H3L7 1V13L3 9H.6ZM9 5Q10.5 7 9 9M11 3Q14 7 11 11M13 1Q18 7 13 13" stroke="#eee" strokeWidth="1.1" /></Icon>
        <Fit w={23} gap={10} size={12.5}>ENG</Fit>
        <Clock $h={34} $w={48} $ml={15}><Fit w={42} size={12}>3:02 PM</Fit><Fit w={46} size={12}>1/3/2018</Fit></Clock>
        <Icon w={16} h={15} gap={20}><path d="M.7.7H15.3V11.5H10L7.5 14.5V11.5H.7Z" stroke="#eee" strokeWidth="1.3" /></Icon>
        <Icon w={1} h={40} gap={20}><path d="M.5 0V40" stroke="#555" /></Icon>
        <Icon w={4} h={1} />
      </Taskbar>
    </Screen>
  );
}
